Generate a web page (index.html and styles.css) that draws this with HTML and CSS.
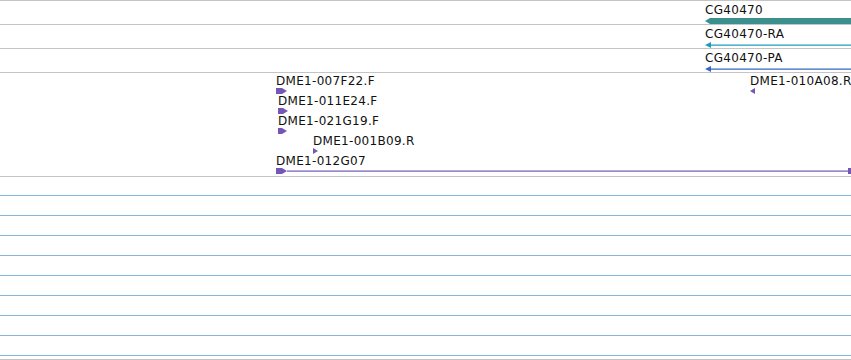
FILE: index.html
```html
<!DOCTYPE html>
<html lang="en">
<head>
<meta charset="UTF-8">
<title>Tracks</title>
<link rel="stylesheet" href="styles.css">
</head>
<body>
<div class="track track-first">
  <div class="feat" style="left:705px;top:2px;">
    <span class="label">CG40470</span>
    <svg class="glyph" width="146" height="8" viewBox="0 0 146 8"><polygon points="0,4 5,1 146,1 146,7 5,7" fill="#3b8f8e"/></svg>
  </div>
</div>
<div class="track">
  <div class="feat" style="left:705px;top:2px;">
    <span class="label">CG40470-RA</span>
    <svg class="glyph" width="146" height="8" viewBox="0 0 146 8"><polygon points="0,4 6,1 6,3.5 146,3.5 146,4.7 6,4.7 6,7" fill="#1c9fb6"/></svg>
  </div>
</div>
<div class="track">
  <div class="feat" style="left:705px;top:2px;">
    <span class="label">CG40470-PA</span>
    <svg class="glyph" width="146" height="8" viewBox="0 0 146 8"><polygon points="0,4 6,1 6,3.5 146,3.5 146,4.7 6,4.7 6,7" fill="#3566c8"/></svg>
  </div>
</div>
<div class="track track-reads">
  <div class="feat" style="left:276px;top:1px;">
    <span class="label">DME1-007F22.F</span>
    <svg class="glyph" width="12" height="6" viewBox="0 0 12 6"><polygon points="0,0 6,0 11,3 6,6 0,6" fill="#7356b6"/></svg>
  </div>
  <div class="feat" style="left:278px;top:21px;">
    <span class="label">DME1-011E24.F</span>
    <svg class="glyph" width="12" height="6" viewBox="0 0 12 6"><polygon points="0,0 5,0 10,3 5,6 0,6" fill="#7356b6"/></svg>
  </div>
  <div class="feat" style="left:278px;top:41px;">
    <span class="label">DME1-021G19.F</span>
    <svg class="glyph" width="12" height="6" viewBox="0 0 12 6"><polygon points="0,0 4,0 9,3 4,6 0,6" fill="#7356b6"/></svg>
  </div>
  <div class="feat" style="left:313px;top:61px;">
    <span class="label">DME1-001B09.R</span>
    <svg class="glyph" width="6" height="6" viewBox="0 0 6 6"><polygon points="0,0 5,3 0,6" fill="#7356b6"/></svg>
  </div>
  <div class="feat" style="left:276px;top:81px;">
    <span class="label">DME1-012G07</span>
    <svg class="glyph" width="575" height="6" viewBox="0 0 575 6"><polygon points="0,0 6,0 11,3 6,6 0,6" fill="#7356b6"/><rect x="11" y="2.5" width="564" height="1.2" fill="#7356b6"/><rect x="572" y="0" width="3" height="6" fill="#7356b6"/></svg>
  </div>
  <div class="feat" style="left:750px;top:1px;">
    <span class="label">DME1-010A08.R</span>
    <svg class="glyph" width="6" height="6" viewBox="0 0 6 6"><polygon points="0,3 5,0 5,6" fill="#7356b6"/></svg>
  </div>
</div>
<div class="track empty empty-first"></div>
<div class="track empty"></div>
<div class="track empty"></div>
<div class="track empty"></div>
<div class="track empty"></div>
<div class="track empty"></div>
<div class="track empty"></div>
<div class="track empty"></div>
<div class="track empty"></div>
<div class="track-end"></div>
</body>
</html>
```

FILE: styles.css
```css
body {
  margin: 0;
  width: 851px;
  overflow: hidden;
  font-family: "DejaVu Sans", sans-serif;
  font-size: 12px;
  color: #111;
  background: #fff;
}
.track {
  position: relative;
  height: 23px;
  border-bottom: 1px solid #c4c4c4;
}
.track-first {
  border-top: 1px solid #c4c4c4;
}
.track-reads {
  height: 103px;
}
.empty {
  height: 19px;
  border-bottom: 1px solid #86b6da;
}
.empty-first {
  height: 18px;
}
.track-end {
  height: 3px;
  border-bottom: 1px solid #c4c4c4;
}
.feat {
  position: absolute;
  display: flex;
  flex-direction: column;
  align-items: flex-start;
  white-space: nowrap;
}
.label {
  line-height: 14px;
  letter-spacing: 0.3px;
}
.glyph {
  display: block;
}
```
